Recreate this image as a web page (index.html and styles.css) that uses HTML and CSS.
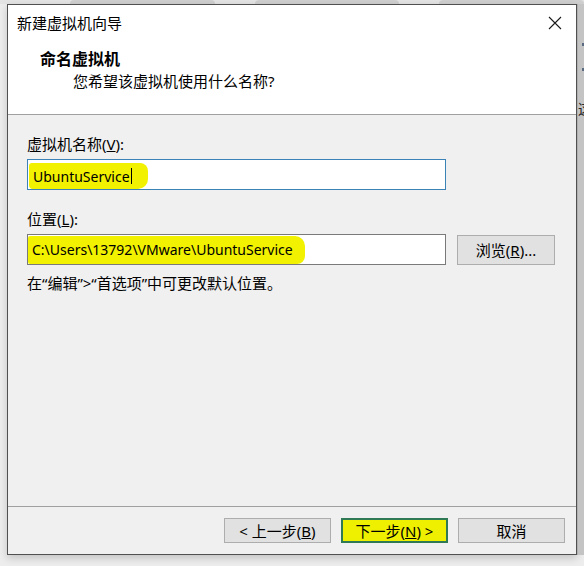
FILE: index.html
```html
<!DOCTYPE html>
<html lang="zh-CN">
<head>
<meta charset="utf-8">
<title>新建虚拟机向导</title>
<link rel="stylesheet" href="styles.css">
</head>
<body>
<div class="screen">
  <div class="tabs"><span class="tab t1"></span><span class="tab t2"></span><span class="tab t3"></span></div>
  <div class="stage">
    <div class="window">
      <div class="head">
        <div class="titlebar">
          <span class="title">新建虚拟机向导</span>
          <svg class="close" width="14" height="14" viewBox="0 0 14 14"><path d="M1 1 L13 13 M13 1 L1 13" stroke="#1a1a1a" stroke-width="1.1" fill="none"/></svg>
        </div>
        <div class="header">
          <div class="h1">命名虚拟机</div>
          <div class="h2">您希望该虚拟机使用什么名称?</div>
        </div>
      </div>
      <div class="body">
        <div class="label">虚拟机名称(<u>V</u>):</div>
        <div class="field focused"><span class="hl hl1">UbuntuService<span class="caret"></span></span></div>
        <div class="label second">位置(<u>L</u>):</div>
        <div class="row">
          <div class="field path"><span class="hl hl2">C:\Users\13792\VMware\UbuntuService</span></div>
          <div class="btn browse">浏览(<u>R</u>)...</div>
        </div>
        <div class="hint">在“编辑”&gt;“首选项”中可更改默认位置。</div>
      </div>
      <div class="footer">
        <div class="btn">&lt; 上一步(<u>B</u>)</div>
        <div class="btn next">下一步(<u>N</u>) &gt;</div>
        <div class="btn">取消</div>
      </div>
    </div>
    <div class="side"><span class="dot d1"></span><span class="dot d2"></span><span class="peek">这</span></div>
  </div>
</div>
</body>
</html>
```

FILE: styles.css
```css
html, body {
  margin: 0;
  padding: 0;
}
body {
  background: #ededed;
  font-family: "Noto Sans", "Noto Sans CJK SC", sans-serif;
  color: #000;
  width: 584px;
  height: 566px;
  overflow: hidden;
}
.screen {
  display: flex;
  flex-direction: column;
  height: 566px;
}
.tabs {
  height: 4px;
  display: flex;
  gap: 40px;
  padding-left: 70px;
  background: #e4e4e4;
}
.tab {
  width: 180px;
  height: 4px;
  background: #cfcfcf;
  border-radius: 4px 4px 0 0;
}
.stage {
  display: flex;
  padding-left: 7px;
}
.window {
  width: 568px;
  height: 549px;
  border: 1px solid #505050;
  background: #f0f0f0;
  display: flex;
  flex-direction: column;
  box-shadow: 0 3px 8px rgba(0,0,0,0.18);
}
.head {
  background: #fff;
  box-sizing: border-box;
  height: 110px;
  border-bottom: 1px solid #a0a0a0;
}
.titlebar {
  height: 36px;
  display: flex;
  align-items: center;
  justify-content: space-between;
  padding: 0 14px 0 9px;
}
.title {
  font-size: 15px;
  line-height: 20px;
}
.close {
  display: block;
}
.header {
  padding: 8px 0 0 32px;
}
.h1 {
  font-size: 16px;
  font-weight: bold;
  line-height: 20px;
}
.h2 {
  font-size: 15px;
  line-height: 20px;
  padding-left: 33px;
  margin-top: 2px;
}
.body {
  flex: 1;
  padding: 19px 21px 0 19px;
  display: flex;
  flex-direction: column;
}
.label {
  font-size: 15px;
  line-height: 20px;
}
.label.second {
  margin-top: 19px;
}
.field {
  margin-top: 5px;
  width: 419px;
  height: 31px;
  box-sizing: border-box;
  border: 1px solid #7a7a7a;
  background: #fff;
  display: flex;
  align-items: center;
  font-size: 14px;
}
.field.focused {
  border-color: #3b83b6;
}
.hl {
  background: #f1f100;
  display: flex;
  align-items: center;
  padding-left: 4px;
}
.hl1 {
  margin-left: 1px;
  height: 26px;
  margin-top: 3px;
  padding-right: 16px;
  border-radius: 3px 8px 10px 4px;
}
.hl2 {
  height: 28px;
  padding-right: 12px;
  border-radius: 2px 10px 8px 2px;
}
.caret {
  display: inline-block;
  width: 1px;
  height: 16px;
  margin-left: 1px;
  background: #000;
}
.row {
  display: flex;
  align-items: center;
  gap: 11px;
  margin-top: 5px;
}
.row .field {
  margin-top: 0;
}
.btn {
  width: 107px;
  height: 25px;
  box-sizing: border-box;
  border: 1px solid #adadad;
  background: #e1e1e1;
  font-size: 15px;
  display: flex;
  align-items: center;
  justify-content: center;
}
.browse {
  width: 98px;
  height: 30px;
}
.hint {
  font-size: 15px;
  line-height: 20px;
  margin-top: 8px;
}
.footer {
  height: 48px;
  box-sizing: border-box;
  border-top: 1px solid #a0a0a0;
  display: flex;
  justify-content: flex-end;
  gap: 10px;
  padding: 11px 11px 0 0;
}
.next {
  background: #eef000;
  border: 2px solid #2f7a55;
}
.side {
  width: 8px;
  height: 551px;
  background: #c4c4c4;
  position: relative;
  overflow: hidden;
  border-left: 1px solid #b0b0b0;
}
.dot {
  position: absolute;
  left: 4px;
  width: 3px;
  height: 3px;
  background: #5a6a80;
}
.d1 { top: 39px; }
.d2 { top: 64px; }
.peek {
  position: absolute;
  left: 0;
  top: 96px;
  font-size: 14px;
  line-height: 18px;
  color: #222;
}
```
